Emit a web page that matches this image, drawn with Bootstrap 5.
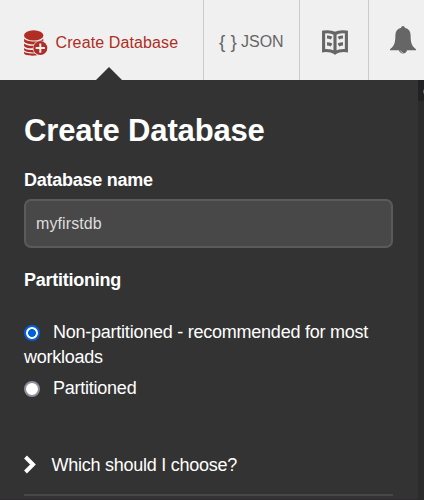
<!DOCTYPE html>
<html lang="en">
<head>
<meta charset="utf-8">
<meta name="viewport" content="width=device-width, initial-scale=1">
<title>Create Database</title>
<link href="https://cdn.jsdelivr.net/npm/bootstrap@5.3.0/dist/css/bootstrap.min.css" rel="stylesheet">
<style>
body{font-family:"Liberation Sans",Arial,sans-serif;background:#333;color:#fff;height:500px;overflow:hidden}
.topbar{height:80px;background:#f0f0f0;color:#666;font-size:16px;line-height:24px}
.tab{border-right:1px solid #ccc;flex:none}
.tab-create{width:204px;padding:6px 0 0 24px;color:#af2d24;letter-spacing:.12px}
.tab-create::after{content:"";position:absolute;left:96px;bottom:0;border:13px solid transparent;border-top:0;border-bottom-color:#333}
.tab-create .label{margin-left:7.5px}
.tab-json{width:96px;padding:3px 0 0 15px}
.brace{font-size:19px;margin-right:4px}
.tab-docs{width:69px;padding:4px 0 0 22px}
.tab-bell{width:55px;padding:0 0 0 21px}
.panel{width:418px;height:420px;padding:33px 25px 0 24px;border-bottom:1px solid #2d2b2d}
.side{width:6px;background:#2b2b2b}
.side-head{height:21px;background:#222224;overflow:hidden}
.side-head i{display:block;width:4px;height:5px;margin:9px 0 0 5px;background:#666;border-radius:2px}
h1{font-size:31px;line-height:36px;height:55px;margin:0;font-weight:700;letter-spacing:-.15px}
.field-title{font-size:18px;line-height:24px;font-weight:700;letter-spacing:-.26px;display:block}
.name-input{height:49px;border:2px solid #5b5b5b;border-radius:7px;background:#484848!important;color:#ddd!important;font-size:16px;letter-spacing:.1px;padding:0 10px;margin-top:7px}
.choice{font-size:18px;line-height:25px;letter-spacing:-.24px}
.choice input{appearance:none;width:16px;height:16px;border:2px solid #8f8f9d;border-radius:50%;background:#fff;margin:0 13px 0 0;vertical-align:-3px}
.choice input:checked{border-color:#0060df;background:radial-gradient(circle,#0060df 0 3.6px,#fff 4.2px)}
.choice-second{padding-top:6px}
.help{font-size:18px;letter-spacing:-.25px;border-bottom:2px solid #484848;height:45px;margin-top:50px;line-height:28px}
.help svg{margin-top:4px}
.help span{margin-left:15.5px}
</style>
<script src="https://cdn.jsdelivr.net/npm/bootstrap@5.3.0/dist/js/bootstrap.bundle.min.js"></script>
</head>
<body>
<nav class="topbar d-flex">
  <div class="tab tab-create position-relative d-flex align-items-center">
    <svg width="24" height="26" viewBox="0 0 24 26" fill="#af2d24">
      <ellipse cx="9.7" cy="5.4" rx="9.7" ry="5.2"/>
      <path d="M.1 8.6c2.2 3.9 17 3.9 19.2 0v3.4c-3 3.2-16 3.2-19.2-.2zM.1 13.4c2.5 2.5 8 2.5 12 2.1l-1.6 2.8c-4.2.2-8.8-.3-10.4-2.1zM.1 17.9c2 2 6 2.2 9.6 2.2l.5 2.3c-4.4 0-8.6-.6-10.1-2.2zM.1 21.8c2.2 1.7 6.6 1.8 11 1.8l2.2 1.7c-5 .7-12.2.4-13.2-1.8z"/>
      <circle cx="16.3" cy="18" r="7.6" fill="#f0f0f0"/><circle cx="16.3" cy="18.1" r="7"/>
      <path d="M16.3 13.5v9.2M11.7 18.1h9.2" stroke="#f0f0f0" stroke-width="2"/>
    </svg>
    <span class="label">Create Database</span>
  </div>
  <div class="tab tab-json d-flex align-items-center"><span class="brace">{ }</span><span>JSON</span></div>
  <div class="tab tab-docs d-flex align-items-center">
    <svg width="26" height="25" viewBox="0 0 26 25" fill="none" stroke="#666">
      <path d="M1.6 2.1Q8 .9 13 3.5 18 .9 24.4 2.1v18.6Q18 20 13 22.7 8 20 1.6 20.7zM13 3v19" stroke-width="3.1"/>
      <path d="M5 7q2.4 0 4.6 1.2M5 13.8q2.4 0 4.6 1.2M21 7q-2.4 0-4.6 1.2M21 13.8q-2.4 0-4.6 1.2" stroke-width="3.2"/>
      <path d="M10.5 22h5L13 25z" fill="#666" stroke="none"/>
    </svg>
  </div>
  <div class="tab-bell d-flex align-items-center">
    <svg width="26" height="28" viewBox="0 0 26 28">
      <path fill="#666" d="M13 0c1 0 1.6.7 1.8 1.8 3.8.9 5.8 3.5 5.8 7.2 0 7.6 1 11 5.4 14.3v1H17.1a4.2 4 0 0 1-8.2 0H0v-1C4.4 20 5.4 16.6 5.4 9c0-3.7 2-6.3 5.8-7.2C11.4.7 12 0 13 0z"/>
      <path d="M10.6 24.6q.4 2 2.4 2.1" fill="none" stroke="#ddd" stroke-width=".7"/>
    </svg>
  </div>
</nav>
<div class="d-flex">
  <main class="panel">
    <h1>Create Database</h1>
    <label class="field-title" for="dbname">Database name</label>
    <input id="dbname" class="form-control name-input shadow-none" value="myfirstdb">
    <div class="field-title mt-3 pt-1">Partitioning</div>
    <div class="choice pt-4 mt-1"><label><input type="radio" name="part" checked>Non-partitioned - recommended for most workloads</label></div>
    <div class="choice choice-second"><label><input type="radio" name="part">Partitioned</label></div>
    <div class="help d-flex align-items-start">
      <svg width="12" height="20" viewBox="0 0 12 20"><path d="M1.5 2l7.5 7.5-7.5 7.5" fill="none" stroke="#fff" stroke-width="4"/></svg>
      <span>Which should I choose?</span>
    </div>
  </main>
  <aside class="side"><div class="side-head"><i></i></div></aside>
</div>
</body>
</html>
